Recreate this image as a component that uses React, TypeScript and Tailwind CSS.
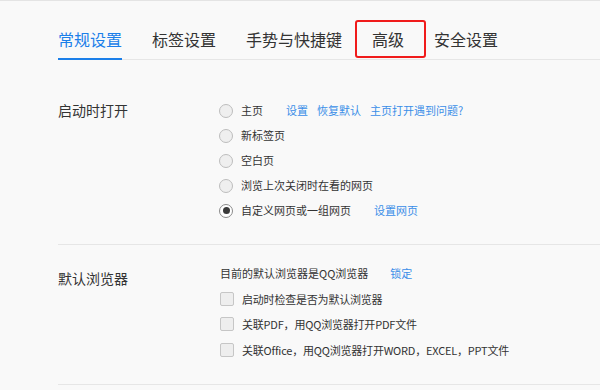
const tabs = ["常规设置", "标签设置", "手势与快捷键", "高级", "安全设置"];

const startupOptions = [
  { label: "主页", links: ["设置", "恢复默认", "主页打开遇到问题?"] },
  { label: "新标签页", links: [] },
  { label: "空白页", links: [] },
  { label: "浏览上次关闭时在看的网页", links: [] },
  { label: "自定义网页或一组网页", links: ["设置网页"], checked: true },
];

const checks = [
  "启动时检查是否为默认浏览器",
  "关联PDF，用QQ浏览器打开PDF文件",
  "关联Office，用QQ浏览器打开WORD，EXCEL，PPT文件",
];

function Radio({ checked }: { checked?: boolean }) {
  return (
    <span
      className={`flex h-[14px] w-[14px] shrink-0 items-center justify-center rounded-full border bg-[#efefef] ${
        checked ? "border-[#8a8a8a] bg-white" : "border-[#bdbdbd]"
      }`}
    >
      {checked && <span className="h-[7px] w-[7px] rounded-full bg-[#3a3a3a]" />}
    </span>
  );
}

function Checkbox() {
  return <span className="h-[14px] w-[14px] shrink-0 rounded-[2px] border border-[#c6c6c6] bg-[#eeeeee]" />;
}

export default function App() {
  return (
    <div
      className="h-[390px] w-[600px] overflow-hidden border-t border-[#e4e4e4] bg-[#f9f9f9] text-[#333]"
      style={{ fontFamily: '"Noto Sans CJK SC", "Liberation Sans", sans-serif' }}
    >
      {/* Tabs */}
      <nav className="ml-[58px] mt-[19px] flex gap-[30px] border-b border-[#e6e6e6]">
        {tabs.map((t, i) => (
          <div
            key={t}
            className={`relative -mb-px flex h-[40px] items-center text-[16px] leading-[20px] ${
              i === 0 ? "border-b-2 border-[#1b7fe9] text-[#1b7fe9]" : "border-b-2 border-transparent text-[#333]"
            }`}
          >
            {t}
            {t === "高级" && (
              <span className="absolute -left-[17px] -right-[22px] top-0 bottom-0 rounded-[3px] border-2 border-[#f01b1b]" />
            )}
          </div>
        ))}
      </nav>

      {/* 启动时打开 */}
      <section className="ml-[58px] flex border-b border-[#e6e6e6] pt-[38px] pb-[21px]">
        <div className="w-[161px] text-[14px] leading-[25px]">启动时打开</div>
        <div className="flex flex-col">
          {startupOptions.map((o) => (
            <div key={o.label} className="flex h-[25px] items-center text-[11px]">
              <Radio checked={o.checked} />
              <span className="ml-[8px]">{o.label}</span>
              {o.links.length > 0 && (
                <span className="ml-[23px] flex gap-[9px] text-[#3a8ee8]">
                  {o.links.map((l) => (
                    <span key={l}>{l}</span>
                  ))}
                </span>
              )}
            </div>
          ))}
        </div>
      </section>

      {/* 默认浏览器 */}
      <section className="ml-[58px] flex border-b border-[#e6e6e6] pt-[15px] pb-[21px]">
        <div className="w-[162px] pt-[6px] text-[14px] leading-[25px]">默认浏览器</div>
        <div className="flex flex-col">
          <div className="flex h-[26px] items-center text-[11px]">
            <span>目前的默认浏览器是QQ浏览器</span>
            <span className="ml-[22px] text-[#3a8ee8]">锁定</span>
          </div>
          {checks.map((c) => (
            <div key={c} className="flex h-[25.5px] items-center text-[11px]">
              <Checkbox />
              <span className="ml-[8px] tracking-[-0.2px]">{c}</span>
            </div>
          ))}
        </div>
      </section>
    </div>
  );
}
